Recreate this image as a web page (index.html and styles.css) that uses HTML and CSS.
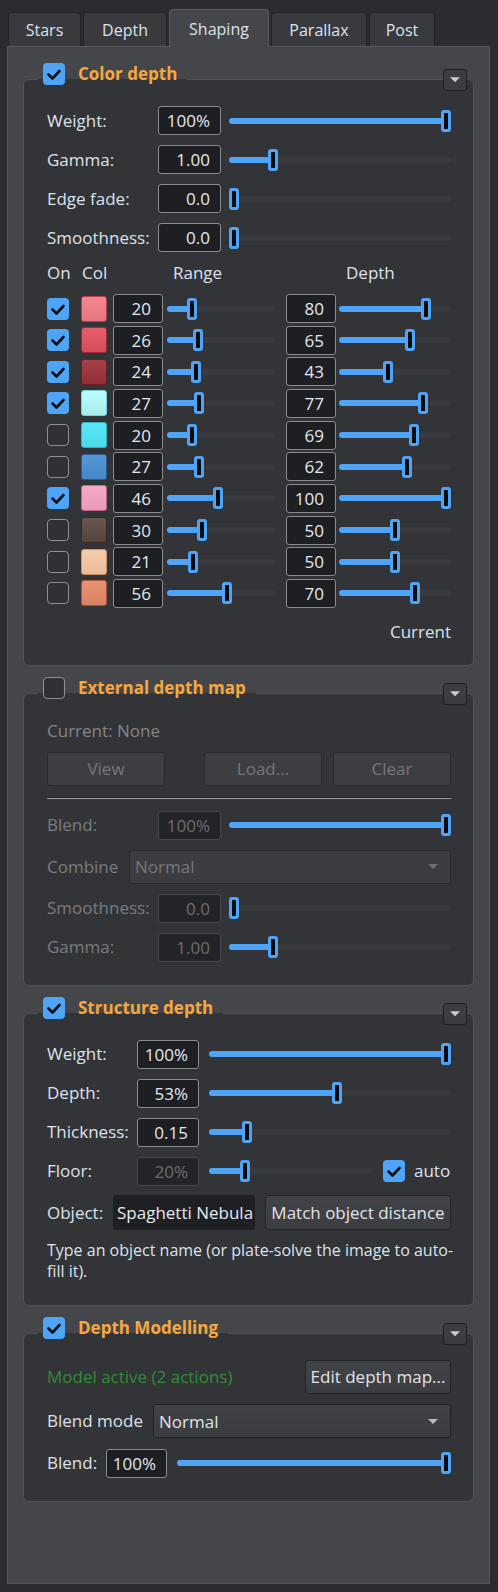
FILE: index.html
```html
<!DOCTYPE html>
<html>
<head>
<meta charset="utf-8">
<link rel="stylesheet" href="styles.css">
</head>
<body>
<div class="tabbar">
  <div class="tab t-stars">Stars</div>
  <div class="tab t-depth">Depth</div>
  <div class="tab t-shaping active">Shaping</div>
  <div class="tab t-parallax">Parallax</div>
  <div class="tab t-post">Post</div>
</div>
<div class="pane">

  <section class="group g1">
    <div class="group-head">
      <div class="legend">
        <span class="cb on"><svg viewBox="0 0 22 22"><path d="M5.5 11.5 9.5 15.5 16.5 8"/></svg></span>
        <span class="title">Color depth</span>
      </div>
      <span class="collapse"><svg viewBox="0 0 24 22"><path d="M6.5 8h11l-5.5 5.5z"/></svg></span>
    </div>
    <div class="frame">
      <div class="row"><span class="lbl">Weight:</span><span class="spin">100%</span><div class="slider" style="--v:1"><i class="fill"></i><i class="knob"></i></div></div>
      <div class="row"><span class="lbl">Gamma:</span><span class="spin">1.00</span><div class="slider" style="--v:.186"><i class="fill"></i><i class="knob"></i></div></div>
      <div class="row"><span class="lbl">Edge fade:</span><span class="spin">0.0</span><div class="slider" style="--v:0"><i class="fill"></i><i class="knob"></i></div></div>
      <div class="row"><span class="lbl">Smoothness:</span><span class="spin">0.0</span><div class="slider" style="--v:0"><i class="fill"></i><i class="knob"></i></div></div>
      <div class="cols-head"><span class="h-on">On</span><span class="h-col">Col</span><span class="h-range">Range</span><span class="h-depth">Depth</span></div>
      <div class="color-list">
        <div class="crow"><span class="cb on"><svg viewBox="0 0 22 22"><path d="M5.5 11.5 9.5 15.5 16.5 8"/></svg></span><span class="swatch" style="background-color:#f47d86;border-color:#b3414b"></span><span class="num">20</span><div class="slider range" style="--v:.20"><i class="fill"></i><i class="knob"></i></div><span class="num dnum">80</span><div class="slider depth" style="--v:.80"><i class="fill"></i><i class="knob"></i></div></div>
        <div class="crow"><span class="cb on"><svg viewBox="0 0 22 22"><path d="M5.5 11.5 9.5 15.5 16.5 8"/></svg></span><span class="swatch" style="background-color:#e3525e;border-color:#a02b36"></span><span class="num">26</span><div class="slider range" style="--v:.26"><i class="fill"></i><i class="knob"></i></div><span class="num dnum">65</span><div class="slider depth" style="--v:.65"><i class="fill"></i><i class="knob"></i></div></div>
        <div class="crow"><span class="cb on"><svg viewBox="0 0 22 22"><path d="M5.5 11.5 9.5 15.5 16.5 8"/></svg></span><span class="swatch" style="background-color:#9d3039;border-color:#6a1c23"></span><span class="num">24</span><div class="slider range" style="--v:.24"><i class="fill"></i><i class="knob"></i></div><span class="num dnum">43</span><div class="slider depth" style="--v:.43"><i class="fill"></i><i class="knob"></i></div></div>
        <div class="crow"><span class="cb on"><svg viewBox="0 0 22 22"><path d="M5.5 11.5 9.5 15.5 16.5 8"/></svg></span><span class="swatch" style="background-color:#b3fcfc;border-color:#7ccfd0"></span><span class="num">27</span><div class="slider range" style="--v:.27"><i class="fill"></i><i class="knob"></i></div><span class="num dnum">77</span><div class="slider depth" style="--v:.77"><i class="fill"></i><i class="knob"></i></div></div>
        <div class="crow"><span class="cb off"></span><span class="swatch" style="background-color:#4fe5f6;border-color:#2bb3c4"></span><span class="num">20</span><div class="slider range" style="--v:.20"><i class="fill"></i><i class="knob"></i></div><span class="num dnum">69</span><div class="slider depth" style="--v:.69"><i class="fill"></i><i class="knob"></i></div></div>
        <div class="crow"><span class="cb off"></span><span class="swatch" style="background-color:#4a8dd2;border-color:#2b5f98"></span><span class="num">27</span><div class="slider range" style="--v:.27"><i class="fill"></i><i class="knob"></i></div><span class="num dnum">62</span><div class="slider depth" style="--v:.62"><i class="fill"></i><i class="knob"></i></div></div>
        <div class="crow"><span class="cb on"><svg viewBox="0 0 22 22"><path d="M5.5 11.5 9.5 15.5 16.5 8"/></svg></span><span class="swatch" style="background-color:#f5a3c5;border-color:#c2668d"></span><span class="num">46</span><div class="slider range" style="--v:.46"><i class="fill"></i><i class="knob"></i></div><span class="num dnum">100</span><div class="slider depth" style="--v:1"><i class="fill"></i><i class="knob"></i></div></div>
        <div class="crow"><span class="cb off"></span><span class="swatch" style="background-color:#5b4840;border-color:#362923"></span><span class="num">30</span><div class="slider range" style="--v:.30"><i class="fill"></i><i class="knob"></i></div><span class="num dnum">50</span><div class="slider depth" style="--v:.50"><i class="fill"></i><i class="knob"></i></div></div>
        <div class="crow"><span class="cb off"></span><span class="swatch" style="background-color:#f7c8a4;border-color:#c7916b"></span><span class="num">21</span><div class="slider range" style="--v:.21"><i class="fill"></i><i class="knob"></i></div><span class="num dnum">50</span><div class="slider depth" style="--v:.50"><i class="fill"></i><i class="knob"></i></div></div>
        <div class="crow"><span class="cb off"></span><span class="swatch" style="background-color:#e68a66;border-color:#a9553a"></span><span class="num">56</span><div class="slider range" style="--v:.56"><i class="fill"></i><i class="knob"></i></div><span class="num dnum">70</span><div class="slider depth" style="--v:.70"><i class="fill"></i><i class="knob"></i></div></div>
      </div>
      <div class="current">Current</div>
    </div>
  </section>

  <section class="group g2">
    <div class="group-head">
      <div class="legend">
        <span class="cb off"></span>
        <span class="title">External depth map</span>
      </div>
      <span class="collapse"><svg viewBox="0 0 24 22"><path d="M6.5 8h11l-5.5 5.5z"/></svg></span>
    </div>
    <div class="frame">
      <div class="note">Current: None</div>
      <div class="btnrow">
        <span class="btn dis">View</span>
        <span class="spacer"></span>
        <span class="btn dis">Load...</span>
        <span class="btn dis b-clear">Clear</span>
      </div>
      <div class="sep"></div>
      <div class="row dim"><span class="lbl">Blend:</span><span class="spin">100%</span><div class="slider" style="--v:1"><i class="fill"></i><i class="knob"></i></div></div>
      <div class="row tall dim"><span class="lbl l-combine">Combine</span><div class="select dis"><span>Normal</span><svg viewBox="0 0 10 5"><path d="M0 0h10L5 5z"/></svg></div></div>
      <div class="row dim"><span class="lbl">Smoothness:</span><span class="spin">0.0</span><div class="slider" style="--v:0"><i class="fill"></i><i class="knob"></i></div></div>
      <div class="row dim"><span class="lbl">Gamma:</span><span class="spin">1.00</span><div class="slider" style="--v:.186"><i class="fill"></i><i class="knob"></i></div></div>
    </div>
  </section>

  <section class="group g3">
    <div class="group-head">
      <div class="legend">
        <span class="cb on"><svg viewBox="0 0 22 22"><path d="M5.5 11.5 9.5 15.5 16.5 8"/></svg></span>
        <span class="title">Structure depth</span>
      </div>
      <span class="collapse"><svg viewBox="0 0 24 22"><path d="M6.5 8h11l-5.5 5.5z"/></svg></span>
    </div>
    <div class="frame">
      <div class="row"><span class="lbl">Weight:</span><span class="spin">100%</span><div class="slider" style="--v:1"><i class="fill"></i><i class="knob"></i></div></div>
      <div class="row"><span class="lbl">Depth:</span><span class="spin">53%</span><div class="slider" style="--v:.53"><i class="fill"></i><i class="knob"></i></div></div>
      <div class="row"><span class="lbl">Thickness:</span><span class="spin">0.15</span><div class="slider" style="--v:.142"><i class="fill"></i><i class="knob"></i></div></div>
      <div class="row"><span class="lbl">Floor:</span><span class="spin spin-dis">20%</span><div class="slider floor" style="--v:.2"><i class="fill"></i><i class="knob"></i></div><span class="cb on auto-cb"><svg viewBox="0 0 22 22"><path d="M5.5 11.5 9.5 15.5 16.5 8"/></svg></span><span class="auto">auto</span></div>
      <div class="row tall"><span class="lbl l-object">Object:</span><span class="text-input">Spaghetti Nebula</span><span class="btn b-match">Match object distance</span></div>
      <div class="help">Type an object name (or plate-solve the image to auto-<br>fill it).</div>
    </div>
  </section>

  <section class="group g4">
    <div class="group-head">
      <div class="legend">
        <span class="cb on"><svg viewBox="0 0 22 22"><path d="M5.5 11.5 9.5 15.5 16.5 8"/></svg></span>
        <span class="title">Depth Modelling</span>
      </div>
      <span class="collapse"><svg viewBox="0 0 24 22"><path d="M6.5 8h11l-5.5 5.5z"/></svg></span>
    </div>
    <div class="frame">
      <div class="row tall"><span class="status">Model active (2 actions)</span><span class="btn b-edit">Edit depth map...</span></div>
      <div class="row tall"><span class="lbl l-mode">Blend mode</span><div class="select"><span>Normal</span><svg viewBox="0 0 10 5"><path d="M0 0h10L5 5z"/></svg></div></div>
      <div class="row"><span class="lbl l-blend">Blend:</span><span class="spin">100%</span><div class="slider" style="--v:1"><i class="fill"></i><i class="knob"></i></div></div>
    </div>
  </section>

</div>
</body>
</html>
```

FILE: styles.css
```css
* { box-sizing: border-box; }
html, body { height: 100%; }
body {
  margin: 0;
  padding: 9px 8px 8px 7px;
  background: #2b2c30;
  font-family: "Open Sans", "Noto Sans", sans-serif;
  font-size: 17px;
  color: #dde2ea;
  display: flex;
  flex-direction: column;
}

/* tabs */
.tabbar {
  display: flex;
  align-items: flex-end;
  gap: 2px;
  margin-left: 1px;
  height: 37px;
  flex: none;
  position: relative;
  z-index: 1;
}
.tab {
  height: 34px;
  display: flex;
  align-items: center;
  justify-content: center;
  background: #393a3e;
  border: 1px solid #232427;
  border-bottom: none;
  border-radius: 4px 4px 0 0;
  font-size: 16px;
  color: #dde2ea;
}
.tab.active {
  height: 38px;
  margin-bottom: -1px;
  background: #45464a;
  border-color: #5a5b5f;
}
.t-stars { width: 73px; }
.t-depth { width: 84px; }
.t-shaping { width: 100px; }
.t-parallax { width: 96px; }
.t-post { width: 66px; }

.pane {
  flex: 1;
  background: #45464a;
  border: 1px solid #57585c;
  padding: 16px 15px 0 15px;
}

/* groups */
.group + .group { margin-top: 11px; }
.group-head {
  display: flex;
  height: 22px;
  margin-bottom: -6px;
  position: relative;
  z-index: 1;
}
.legend {
  display: flex;
  align-items: center;
  gap: 13px;
  margin-left: 15px;
  padding: 0 10px 0 5px;
  height: 22px;
  background: linear-gradient(to bottom, #45464a 16px, #333438 16px);
}
.title {
  font-weight: 700;
  color: #f6a73e;
  line-height: 22px;
  white-space: nowrap;
}
.collapse {
  margin-left: auto;
  margin-right: 7px;
  margin-top: 6px;
  width: 24px;
  height: 22px;
  background: #3c3d41;
  border: 1px solid #1d1e21;
  border-radius: 3px;
  display: flex;
}
.collapse svg { width: 22px; height: 20px; }
.collapse path { fill: #c9cacd; }

.frame {
  background: #333438;
  border: 1px solid #525357;
  border-radius: 6px;
  padding: 26px 22px 23px 23px;
  display: flex;
  flex-direction: column;
  gap: 10px;
}

/* checkbox */
.cb {
  width: 22px;
  height: 22px;
  border-radius: 4px;
  flex: none;
  display: inline-flex;
}
.cb svg { width: 22px; height: 22px; }
.cb.on { background: #4ea5f8; }
.cb.on path {
  fill: none;
  stroke: #0e0f12;
  stroke-width: 2.6;
  stroke-linecap: round;
  stroke-linejoin: round;
}
.cb.off {
  border: 1.5px solid #8e8f93;
  background: #303135;
}

/* rows */
.row {
  display: flex;
  align-items: center;
  height: 29px;
}
.row.tall { height: 34px; }
.lbl {
  flex: none;
  width: 111px;
  white-space: nowrap;
  line-height: 22px;
}
.spin {
  flex: none;
  width: 63px;
  height: 29px;
  border: 1px solid #8b8c8f;
  border-radius: 3px;
  background: #1e1f22;
  text-align: right;
  padding-right: 10px;
  line-height: 27px;
  color: #e4e8ef;
}

/* slider */
.slider {
  flex: 1;
  position: relative;
  height: 22px;
  margin-left: 8px;
}
.slider::before {
  content: "";
  position: absolute;
  left: 0;
  right: 0;
  top: 8px;
  height: 6px;
  border-radius: 3px;
  background: #3a3b40;
}
.fill {
  position: absolute;
  left: 0;
  top: 8px;
  height: 6px;
  border-radius: 3px;
  background: #4ea5f8;
  width: calc((100% - 10px) * var(--v) + 5px);
}
.knob {
  position: absolute;
  top: 0;
  left: calc((100% - 10px) * var(--v));
  width: 10px;
  height: 22px;
  border: 3px solid #4ea5f8;
  border-radius: 3px;
  background: #0b0b0c;
}

/* color list */
.cols-head {
  display: flex;
  height: 22px;
  line-height: 22px;
}
.h-on { width: 35px; }
.h-col { width: 91px; }
.h-range { width: 173px; }
.color-list {
  display: flex;
  flex-direction: column;
  gap: 2.67px;
}
.crow {
  display: flex;
  align-items: center;
  height: 29px;
}
.swatch {
  flex: none;
  width: 26px;
  height: 26px;
  margin-left: 12px;
  border: 1.5px solid;
  border-radius: 3px;
  background-image: linear-gradient(to bottom, rgba(255,255,255,0.08), rgba(0,0,0,0.06));
}
.num {
  flex: none;
  width: 50px;
  height: 29px;
  margin-left: 6px;
  border: 1px solid #8b8c8f;
  border-radius: 3px;
  background: #1e1f22;
  text-align: right;
  padding-right: 11px;
  line-height: 27px;
  color: #e4e8ef;
}
.slider.range { flex: none; width: 109px; margin-left: 4px; }
.num.dnum { margin-left: 10px; }
.slider.depth { margin-left: 3px; }
.current {
  text-align: right;
  line-height: 22px;
  margin: 3px 0 -1px;
}

/* external */
.note { line-height: 22px; color: #838488; }
.btnrow { display: flex; height: 34px; }
.spacer { flex: 1; }
.btn {
  flex: none;
  height: 34px;
  display: flex;
  align-items: center;
  justify-content: center;
  background: linear-gradient(to bottom, #424347, #3c3d41);
  border: 1px solid #232427;
  border-radius: 3px;
  color: #e0e4ea;
  white-space: nowrap;
  padding: 0 5px;
}
.btnrow .btn { width: 118px; }
.btn.dis {
  color: #75767a;
  background: #3d3e42;
  border-color: #292a2d;
}
.b-clear { margin-left: 11px; }
.sep {
  height: 2px;
  margin: 1px 0 2px;
  border-top: 1px solid #222326;
  background: #9d9ea1;
}
.dim .lbl { color: #7a7b7f; }
.dim .spin, .spin.spin-dis {
  border-color: #47484c;
  background: #232427;
  color: #6c6d71;
}
.lbl.l-combine { width: 82px; }
.select {
  flex: 1;
  height: 34px;
  display: flex;
  align-items: center;
  justify-content: space-between;
  padding: 0 12px 0 5px;
  background: linear-gradient(to bottom, #414246, #3b3c40);
  border: 1px solid #202124;
  border-radius: 3px;
  color: #e0e4ea;
}
.select svg { width: 10px; height: 5px; }
.select path { fill: #b9babd; }
.select.dis { color: #74757a; background: #3c3d41; border-color: #2a2b2e; }
.select.dis path { fill: #6e6f73; }

/* structure */
.g3 .lbl { width: 90px; }
.g3 .spin { width: 62px; }
.g3 .slider { margin-left: 10px; }
.g3 .slider.floor { flex: none; width: 164px; }
.auto-cb { margin-left: 10px; }
.auto { margin-left: 9px; line-height: 22px; }
.g3 .lbl.l-object { width: 66px; }
.text-input {
  flex: none;
  width: 142px;
  height: 35px;
  padding-left: 4px;
  line-height: 35px;
  background: #1f2023;
  border-radius: 3px;
  white-space: nowrap;
  overflow: hidden;
  color: #e6eaf1;
}
.b-match { flex: 1; margin-left: 10px; height: 35px; }
.help {
  font-size: 16px;
  line-height: 21px;
  white-space: nowrap;
}

/* modelling */
.g4 .frame { gap: 10.5px; }
.status { color: #2f8c37; line-height: 22px; }
.b-edit { margin-left: auto; width: 146px; }
.g4 .lbl.l-mode { width: 106px; }
.g4 .lbl.l-blend { width: 59px; }
.g4 .spin { width: 61px; }
.g4 .slider { margin-left: 10px; }
```
